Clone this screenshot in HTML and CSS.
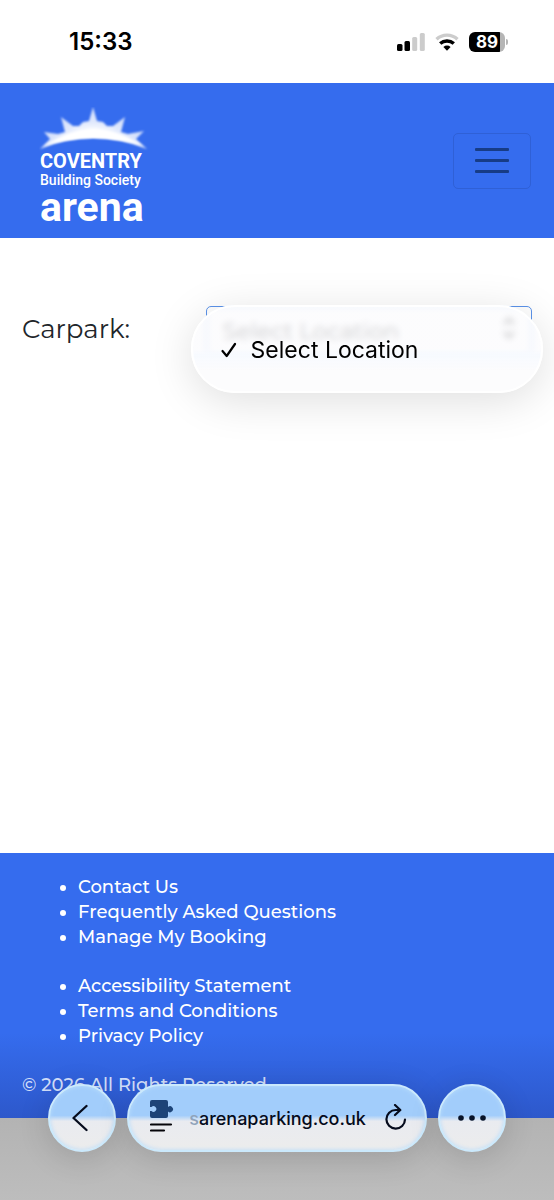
FILE: index.html
```html
<!DOCTYPE html>
<html lang="en">
<head>
<meta charset="utf-8">
<meta name="viewport" content="width=device-width, initial-scale=1">
<title>Coventry Building Society Arena Parking</title>
<link rel="stylesheet" href="styles.css">
</head>
<body>
<div class="screen">
  <div class="status">
    <time class="clock">15:33</time>
    <div class="indicators">
      <svg width="29" height="20" viewBox="0 0 29 20" role="img" aria-label="Signal">
        <rect x="1" y="12" width="5.500" height="7" rx="1.500" fill="#000"/>
        <rect x="8.500" y="9" width="5.500" height="10" rx="1.500" fill="#000"/>
        <rect x="16.200" y="5" width="5" height="14" rx="1.500" fill="#ccc"/>
        <rect x="23.800" y="1" width="5" height="18" rx="1.500" fill="#ccc"/>
      </svg>
      <svg width="24" height="18" viewBox="0 0 24 18" role="img" aria-label="Wi-Fi">
        <path d="M1.500 6.200a15.500 15.500 0 0 1 21 0" fill="none" stroke="#ccc" stroke-width="3.400"/>
        <path d="M5.200 10.600a10 10 0 0 1 13.600 0" fill="none" stroke="#000" stroke-width="3.400"/>
        <path d="M12 17.800l-3.600-3.800a5.200 5.200 0 0 1 7.200 0z" fill="#000"/>
      </svg>
      <div class="battery"><span class="battery-level">89</span></div>
    </div>
  </div>

  <header class="header">
    <a class="logo" href="#" aria-label="Coventry Building Society Arena">
      <svg class="sun" viewBox="0 0 110 44" aria-hidden="true">
        <defs>
          <radialGradient id="ray" gradientUnits="userSpaceOnUse" cx="54" cy="62" r="62">
            <stop offset="0.600" stop-color="#fff"/>
            <stop offset="0.750" stop-color="#fff" stop-opacity="0.850"/>
            <stop offset="1" stop-color="#fff" stop-opacity="0.750"/>
          </radialGradient>
          <filter id="glow"><feGaussianBlur stdDeviation="0.800"/></filter>
        </defs>
        <path filter="url(#glow)" fill="url(#ray)" d="M1 42L11 32 5 25 19 27 26 25 22 10 34 19 40 19 44 15 50 14 54 0 58 14 64 15 68 19 74 19 86 10 82 25 89 27 105 24 97 32 108 42Q54 20 1 42z"/>
        <path filter="url(#glow)" fill="#fff" d="M5 39Q27 24 54 22Q82 24 104 39Q80 31 54 31Q29 31 5 39z"/>
      </svg>
      <span class="logo-city">COVENTRY</span>
      <span class="logo-society">Building Society</span>
      <span class="logo-arena">arena</span>
    </a>
    <button class="menu-toggle" type="button" aria-label="Toggle navigation">
      <span class="bar"></span><span class="bar"></span><span class="bar"></span>
    </button>
  </header>

  <main class="main">
    <div class="field">
      <label class="label" for="carpark">Carpark:</label>
      <div class="picker">
        <select class="select" id="carpark"><option>Select Location</option></select>
        <svg class="chevrons" width="14" height="24" viewBox="0 0 14 24" aria-hidden="true"><path d="M2 8l5-5 5 5M2 16l5 5 5-5" fill="none" stroke="#333" stroke-width="3"/></svg>
        <div class="menu">
          <button class="menu-item" type="button">
            <svg width="16" height="16" viewBox="0 0 16 16" aria-hidden="true"><path d="M1.500 9l4.200 5L14 2" fill="none" stroke="#000" stroke-width="2.200" stroke-linecap="round" stroke-linejoin="round"/></svg>
            <span>Select Location</span>
          </button>
        </div>
      </div>
    </div>
  </main>

  <footer class="footer">
    <ul class="links">
      <li><a href="#">Contact Us</a></li>
      <li><a href="#">Frequently Asked Questions</a></li>
      <li><a href="#">Manage My Booking</a></li>
    </ul>
    <ul class="links">
      <li><a href="#">Accessibility Statement</a></li>
      <li><a href="#">Terms and Conditions</a></li>
      <li><a href="#">Privacy Policy</a></li>
    </ul>
    <p class="copyright">© 2026 All Rights Reserved</p>
  </footer>
  <div class="underlay"></div>

  <nav class="toolbar" aria-label="Browser">
    <button class="glass round" type="button" aria-label="Back">
      <svg width="20" height="28" viewBox="0 0 20 28" aria-hidden="true"><path d="M14.500 2L1.500 14l13 12" fill="none" stroke="#050b1c" stroke-width="2.300" stroke-linecap="round" stroke-linejoin="round"/></svg>
    </button>
    <div class="glass address">
      <button class="plain" type="button" aria-label="Page settings">
        <svg width="24" height="38" viewBox="0 0 24 38" aria-hidden="true">
          <path d="M2 1h14a2 2 0 0 1 2 2v5a3 3 0 1 1 0 4.500V17a2 2 0 0 1-2 2H2a2 2 0 0 1-2-2v-5h1.500a2.800 2.800 0 1 0 0-4H0V3a2 2 0 0 1 2-2z" fill="#1d4478"/>
          <path d="M1 25.500h20M1 31.500h13" stroke="#050509" stroke-width="2.200" stroke-linecap="round"/>
        </svg>
      </button>
      <span class="url"><span class="faded">s</span>arenaparking.co.uk</span>
      <button class="plain" type="button" aria-label="Reload">
        <svg width="24" height="28" viewBox="0 0 24 28" aria-hidden="true"><path d="M21 15.500A9.300 9.300 0 1 1 11.700 6H16M11 1l5.300 5-5.300 5" fill="none" stroke="#050b1c" stroke-width="2.200" stroke-linecap="round" stroke-linejoin="round"/></svg>
      </button>
    </div>
    <button class="glass round" type="button" aria-label="More">
      <svg width="30" height="8" viewBox="0 0 30 8" aria-hidden="true"><g fill="#071329"><circle cx="4" cy="4" r="2.800"/><circle cx="15" cy="4" r="2.800"/><circle cx="26" cy="4" r="2.800"/></g></svg>
    </button>
  </nav>
</div>
</body>
</html>
```
FILE: styles.css
```css
* { box-sizing: border-box; }

body {
  margin: 0;
  background: #fff;
  color: #212529;
  font-family: Montserrat, Inter, sans-serif;
}

button, select { font: inherit; color: inherit; }
button { border: 0; background: none; padding: 0; }

.screen {
  position: relative;
  display: flex;
  flex-direction: column;
  min-height: 100vh;
  overflow: hidden;
}

/* Status bar */
.status {
  display: flex;
  align-items: center;
  justify-content: space-between;
  height: 83px;
  padding: 0 49px 0 69px;
  color: #000;
  font-family: Inter, sans-serif;
}
.clock { font-size: 24px; font-weight: 600; }
.indicators { display: flex; align-items: center; gap: 10px; }
.battery {
  position: relative;
  width: 36px;
  height: 20px;
  border-radius: 6px;
  background: linear-gradient(90deg, #000 31px, #b5b5b5 31px);
  text-align: center;
}
.battery::after {
  content: "";
  position: absolute;
  left: 37px;
  top: 7px;
  width: 2px;
  height: 6px;
  border-radius: 0 2px 2px 0;
  background: #b5b5b5;
}
.battery-level {
  display: block;
  color: #fff;
  font-size: 17px;
  font-weight: 700;
  line-height: 20px;
}

/* Site header */
.header {
  display: flex;
  align-items: center;
  justify-content: space-between;
  height: 155px;
  padding: 0 23px 0 39px;
  background: #356cee;
}
.logo {
  display: flex;
  flex-direction: column;
  padding-top: 10px;
  color: #fff;
  text-decoration: none;
  white-space: nowrap;
  font-family: Roboto, sans-serif;
}
.sun { width: 110px; height: 44px; }
.logo span { padding-left: 1px; }
.logo-city { font-size: 20px; font-weight: 700; line-height: 21px; }
.logo-society { font-size: 14px; font-weight: 500; line-height: 17px; }
.logo-arena { font-size: 41px; font-weight: 700; line-height: 36px; }

.menu-toggle {
  display: flex;
  flex-direction: column;
  align-items: center;
  justify-content: center;
  gap: 8px;
  width: 78px;
  height: 56px;
  border: 1px solid #2f60d6;
  border-radius: 5px;
}
.bar { width: 34px; height: 3px; border-radius: 1px; background: #173c86; }

/* Carpark form */
.main { flex: 1; padding: 68px 22px 0; }
.field { display: flex; align-items: flex-start; justify-content: space-between; }
.label { font-size: 26px; line-height: 46px; }
.picker { position: relative; width: 64%; }
.select {
  display: block;
  width: 100%;
  height: 50px;
  padding: 0 16px;
  appearance: none;
  border: 1px solid #5b93ea;
  border-radius: 5px;
  background: #fff;
  color: #222;
  font-size: 23px;
}
.chevrons { position: absolute; right: 16px; top: 10px; }
.menu {
  position: absolute;
  top: -1px;
  left: -15px;
  right: -11px;
  display: flex;
  height: 88px;
  border: 2px solid #fff;
  border-radius: 44px;
  background: linear-gradient(rgba(251, 251, 253, 0.78) 50%, rgba(247, 250, 255, 0.98) 57%, #fcfcfd 76%);
  backdrop-filter: blur(3px);
  box-shadow: 0 8px 44px rgba(0, 0, 0, 0.13);
}
.menu-item {
  display: flex;
  flex: 1;
  align-items: center;
  gap: 14px;
  padding: 2px 28px 0;
  color: #000;
  font-family: Inter, sans-serif;
  font-size: 23px;
}

/* Site footer */
.footer {
  display: flex;
  flex-direction: column;
  gap: 24px;
  padding: 22px 22px 20px;
  background: linear-gradient(#356cee 68%, #2d58cb);
  color: #fff;
  font-size: 18px;
  font-weight: 500;
  line-height: 25px;
}
.links { margin: 0; padding-left: 56px; }
.links a { color: inherit; text-decoration: none; }
.copyright { margin: 0; color: #d2def9; }

.underlay { height: 82px; background: linear-gradient(#b3b3b3, #bdbdbd); }

/* Floating browser toolbar */
.toolbar {
  position: absolute;
  left: 48px;
  right: 48px;
  bottom: 48px;
  display: flex;
  gap: 11px;
}
.glass {
  display: flex;
  align-items: center;
  justify-content: center;
  height: 68px;
  border: 2px solid #cbe9fc;
  border-radius: 34px;
  background: linear-gradient(#a2cdfb 46%, #e9ebf0 55%, #ececec);
  box-shadow: inset 0 0 4px #b9dcfb, 0 6px 32px rgba(0, 0, 0, 0.14);
}
.round { flex: none; width: 68px; }
.address {
  flex: 1;
  justify-content: space-between;
  padding: 0 17px 0 21px;
}
.plain { display: flex; }
.url {
  padding-right: 3px;
  color: #050b1c;
  font-family: Inter, sans-serif;
  font-size: 18px;
  font-weight: 500;
  white-space: nowrap;
}
.faded { color: #8fa3bb; }
```
